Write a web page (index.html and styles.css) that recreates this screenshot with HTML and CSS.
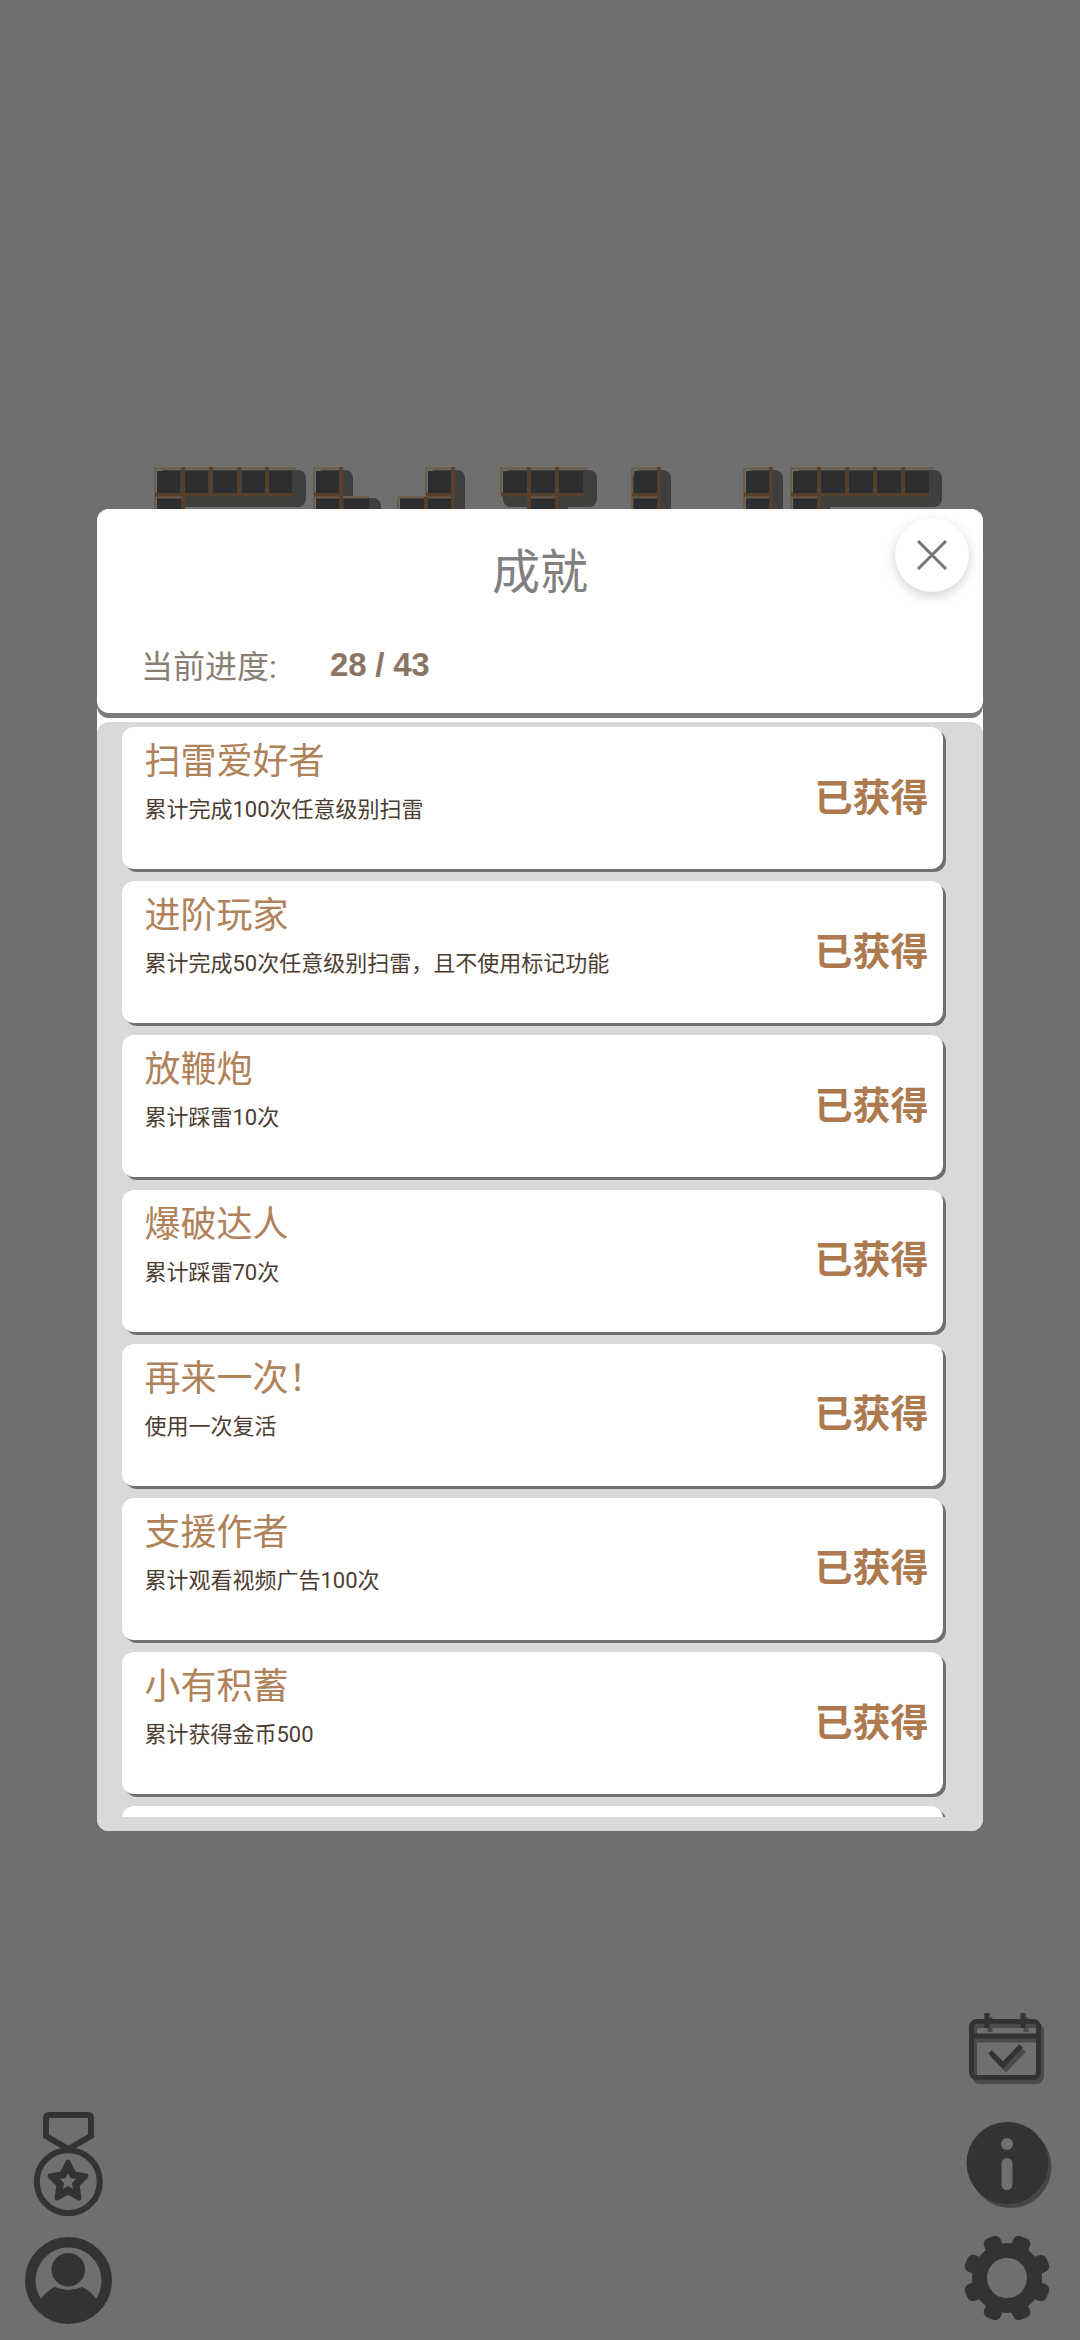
FILE: index.html
```html
<!DOCTYPE html>
<html lang="zh">
<head>
<meta charset="utf-8">
<title>成就</title>
<link rel="stylesheet" href="styles.css">
</head>
<body>
<div class="page">
  <svg class="board" width="1080" height="60" viewBox="0 460 1080 60">
    <g class="shade">
      <rect x="157" y="470" width="149" height="37" rx="8"/>
      <rect x="316" y="470" width="37" height="40" rx="8"/>
      <rect x="316" y="498" width="65" height="20" rx="8"/>
      <rect x="428" y="470" width="37" height="48" rx="8"/>
      <rect x="400" y="498" width="65" height="20"/>
      <rect x="503" y="470" width="94" height="37" rx="8"/>
      <rect x="531" y="498" width="37" height="20"/>
      <rect x="633" y="470" width="38" height="48" rx="8"/>
      <rect x="746" y="470" width="37" height="48" rx="8"/>
      <rect x="793" y="470" width="149" height="37" rx="8"/>
      <rect x="793" y="498" width="37" height="20"/>
    </g>
    <path class="grid-faint" d="M155 468.500H296M155 467V518M155 497H183
      M314 468.500H342M314 467V518M314 497H369
      M426 468.500H453M426 467V518M398 497H453M398 497V518
      M501 468.500H588M501 467V494M529 497H557
      M632 468.500H660M632 467V518M632 497H659
      M744 468.500H772M744 467V518M744 497H771
      M791 468.500H934M791 467V518M791 497H819"/>
    <path class="grid" d="M183 467V496M211 467V496M239 467V496M267 467V496M155 494.500H293M183 497V518
      M341 467V518M314 494.500H341
      M453 467V518M426 494.500H453M426 497V518
      M529 467V518M557 467V496M501 494.500H585M557 497V518
      M659 467V518M632 494.500H659
      M771 467V518M744 494.500H771
      M819 467V518M847 467V496M875 467V496M903 467V496M791 494.500H931"/>
    <g class="cell">
      <rect x="157" y="471" width="23" height="22"/><rect x="185" y="471" width="23" height="22"/><rect x="213" y="471" width="24" height="22"/><rect x="242" y="471" width="23" height="22"/><rect x="269" y="471" width="23" height="22"/>
      <rect x="157" y="499" width="24" height="20"/>
      <rect x="316" y="471" width="23" height="22"/><rect x="316" y="499" width="23" height="20"/><rect x="344" y="499" width="25" height="20"/>
      <rect x="428" y="471" width="23" height="22"/><rect x="428" y="499" width="23" height="20"/><rect x="400" y="499" width="24" height="20"/>
      <rect x="503" y="471" width="24" height="22"/><rect x="531" y="471" width="24" height="22"/><rect x="559" y="471" width="24" height="22"/><rect x="531" y="499" width="24" height="20"/>
      <rect x="634" y="471" width="23" height="22"/><rect x="634" y="499" width="23" height="20"/>
      <rect x="746" y="471" width="23" height="22"/><rect x="746" y="499" width="23" height="20"/>
      <rect x="793" y="471" width="24" height="22"/><rect x="821" y="471" width="24" height="22"/><rect x="849" y="471" width="24" height="22"/><rect x="877" y="471" width="24" height="22"/><rect x="905" y="471" width="24" height="22"/><rect x="793" y="499" width="24" height="20"/>
    </g>
  </svg>

  <section class="modal">
    <header class="modal-head">
      <h1 class="modal-title">成就</h1>
      <div class="progress">
        <span class="progress-label">当前进度:</span>
        <span class="progress-value">28 / 43</span>
      </div>
      <button class="close" aria-label="关闭">
        <svg width="30" height="30" viewBox="0 0 30 30"><path d="M1 1L29 29M29 1L1 29"/></svg>
      </button>
    </header>
    <div class="panel">
      <div class="list">
        <article class="card"><div class="card-text"><h2 class="card-title">扫雷爱好者</h2><p class="card-desc">累计完成100次任意级别扫雷</p></div><span class="card-state">已获得</span></article>
        <article class="card"><div class="card-text"><h2 class="card-title">进阶玩家</h2><p class="card-desc">累计完成50次任意级别扫雷，且不使用标记功能</p></div><span class="card-state">已获得</span></article>
        <article class="card"><div class="card-text"><h2 class="card-title">放鞭炮</h2><p class="card-desc">累计踩雷10次</p></div><span class="card-state">已获得</span></article>
        <article class="card"><div class="card-text"><h2 class="card-title">爆破达人</h2><p class="card-desc">累计踩雷70次</p></div><span class="card-state">已获得</span></article>
        <article class="card"><div class="card-text"><h2 class="card-title">再来一次！</h2><p class="card-desc">使用一次复活</p></div><span class="card-state">已获得</span></article>
        <article class="card"><div class="card-text"><h2 class="card-title">支援作者</h2><p class="card-desc">累计观看视频广告100次</p></div><span class="card-state">已获得</span></article>
        <article class="card"><div class="card-text"><h2 class="card-title">小有积蓄</h2><p class="card-desc">累计获得金币500</p></div><span class="card-state">已获得</span></article>
        <article class="card"></article>
      </div>
    </div>
  </section>

  <footer class="dock">
    <div class="dock-col dock-left">
      <svg class="icon" width="88" height="106" viewBox="0 0 88 106">
        <path class="line" d="M24 5H63Q66 5 66 8V26L43.300 39L21 26V8Q21 5 24 5Z"/>
        <circle class="line" cx="43.300" cy="71.700" r="31.500"/>
        <path class="star" d="M43 52L49 64L61 66L52 75L54 88L43 82L32 88L34 75L25 66L37 64Z"/>
        <path class="hole" d="M43 63L45.500 68L51 69L47 73L48 79L43 76L38 79L39 73L35 69L40.500 68Z"/>
      </svg>
      <svg class="icon" width="88" height="88" viewBox="0 0 88 88">
        <circle class="line-thick" cx="43.500" cy="43.500" r="38.200"/>
        <circle class="solid" cx="43.300" cy="32.700" r="16.800"/>
        <path class="solid" d="M15 63C20 56 25 52 30 50Q43 56 57 50C62 52 67 56 72 63L72 68Q58 80 43.500 80Q29 80 15 68Z"/>
      </svg>
    </div>
    <div class="dock-col dock-right">
      <svg class="icon icon-cal" width="80" height="74" viewBox="0 0 80 74">
        <g class="ghost">
          <rect class="line-thin" x="7.500" y="13.500" width="67" height="56" rx="5"/>
          <path class="line-thin" d="M7.500 28H74.500M23 5V20M59 5V20"/>
          <path class="line-thin" d="M26 44L39 57L57 38"/>
        </g>
        <rect class="line-thin" x="4.500" y="9.500" width="67" height="56" rx="5"/>
        <path class="line-thin" d="M4.500 24H71.500M20 1V16M56 1V16"/>
        <path class="line-thin" d="M23 40L36 53L54 34"/>
      </svg>
      <svg class="icon" width="90" height="88" viewBox="0 0 90 88">
        <circle class="ghost-fill" cx="48.500" cy="45" r="41"/>
        <circle class="solid" cx="45.500" cy="41" r="41"/>
        <circle class="hole" cx="45" cy="22" r="6"/>
        <rect class="hole" x="39.500" y="36" width="11" height="32" rx="5.500"/>
      </svg>
      <svg class="icon" width="88" height="88" viewBox="-44 -44 88 88">
        <circle class="gear-ring" r="27.500"/>
        <rect class="solid" x="-9" y="-44" width="18" height="22" rx="6" transform="rotate(22.500)"/>
        <rect class="solid" x="-9" y="-44" width="18" height="22" rx="6" transform="rotate(67.500)"/>
        <rect class="solid" x="-9" y="-44" width="18" height="22" rx="6" transform="rotate(112.500)"/>
        <rect class="solid" x="-9" y="-44" width="18" height="22" rx="6" transform="rotate(157.500)"/>
        <rect class="solid" x="-9" y="-44" width="18" height="22" rx="6" transform="rotate(202.500)"/>
        <rect class="solid" x="-9" y="-44" width="18" height="22" rx="6" transform="rotate(247.500)"/>
        <rect class="solid" x="-9" y="-44" width="18" height="22" rx="6" transform="rotate(292.500)"/>
        <rect class="solid" x="-9" y="-44" width="18" height="22" rx="6" transform="rotate(337.500)"/>
      </svg>
    </div>
  </footer>
</div>
</body>
</html>
```

FILE: styles.css
```css
* { box-sizing: border-box; margin: 0; padding: 0; }
html, body { width: 1080px; height: 2340px; overflow: hidden; }
body { background: #6f6f6e; font-family: Roboto, "Noto Sans CJK SC", sans-serif; }

.page { position: relative; width: 1080px; height: 2340px; display: flex; flex-direction: column; padding-top: 509px; }

.board { position: absolute; left: 0; top: 460px; }
.shade rect { fill: #3f3f3e; }
.grid { fill: none; stroke: #54402c; stroke-width: 4; }
.grid-faint { fill: none; stroke: #6c5c4a; stroke-width: 2; }
.cell rect { fill: #2c2e30; }

.modal { width: 886px; margin-left: 97px; position: relative; flex: none; background: #fff; border-radius: 12px; }
.modal-head { position: relative; height: 204px; background: #fff; border-radius: 12px; box-shadow: 0 5px 0 #7a7a7a; z-index: 1; padding-top: 28px; }
.modal-title { font-size: 48px; font-weight: 400; line-height: 72px; color: #808080; text-align: center; }
.progress { display: flex; align-items: center; margin-top: 34px; padding-left: 44px; height: 44px; }
.progress-label { font-size: 32px; color: #8a7f75; width: 189px; padding-bottom: 3px; }
.progress-value { font-family: "Liberation Sans", sans-serif; font-size: 33px; font-weight: 700; color: #8b7565; letter-spacing: -0.2px; }

.close { position: absolute; top: 9px; right: 14px; width: 74px; height: 74px; border: 0; border-radius: 50%; background: #fff; box-shadow: 0 4px 12px rgba(0,0,0,.18); display: flex; align-items: center; justify-content: center; }
.close path { fill: none; stroke: #757575; stroke-width: 3; }

.panel { margin-top: 9px; height: 1109px; background: #d9d9d9; border-radius: 12px; padding: 5px 0 0 24.5px; }
.list { width: 826px; height: 1090px; overflow: hidden; display: flex; flex-direction: column; gap: 12.2px; }
.card { flex: none; width: 821px; height: 142px; background: #fff; border-radius: 12px; box-shadow: 3px 3px 0 #707070; display: flex; align-items: center; justify-content: space-between; padding: 0 14px 8px 23px; }
.card-text { align-self: flex-start; }
.card-title { font-size: 36px; font-weight: 400; line-height: 48px; margin-top: 11px; color: #b08259; }
.card-desc { font-size: 22px; line-height: 32px; margin-top: 8px; color: #4c3d32; }
.card-state { font-size: 38px; font-weight: 700; color: #ad7a50; }

.dock { margin-top: auto; display: flex; justify-content: space-between; align-items: flex-end; padding: 0 28px 15px 25px; }
.dock-col { display: flex; flex-direction: column; align-items: center; }
.dock-left { gap: 21px; width: 88px; }
.dock-right { gap: 24px; width: 90px; padding-bottom: 3px; }
.icon { display: block; }
.icon-cal { margin-bottom: 12px; }
.line { fill: none; stroke: #333; stroke-width: 6; }
.line-thick { fill: none; stroke: #333; stroke-width: 10.5; }
.line-thin { fill: none; stroke: #333; stroke-width: 5; }
.star { fill: #333; stroke: #333; stroke-width: 5; stroke-linejoin: round; }
.gear-ring { fill: none; stroke: #333; stroke-width: 15; }
.solid { fill: #333; }
.hole { fill: #6f6f6e; }
.ghost .line-thin { stroke: #4a4a4a; }
.ghost-fill { fill: #464646; }
```
